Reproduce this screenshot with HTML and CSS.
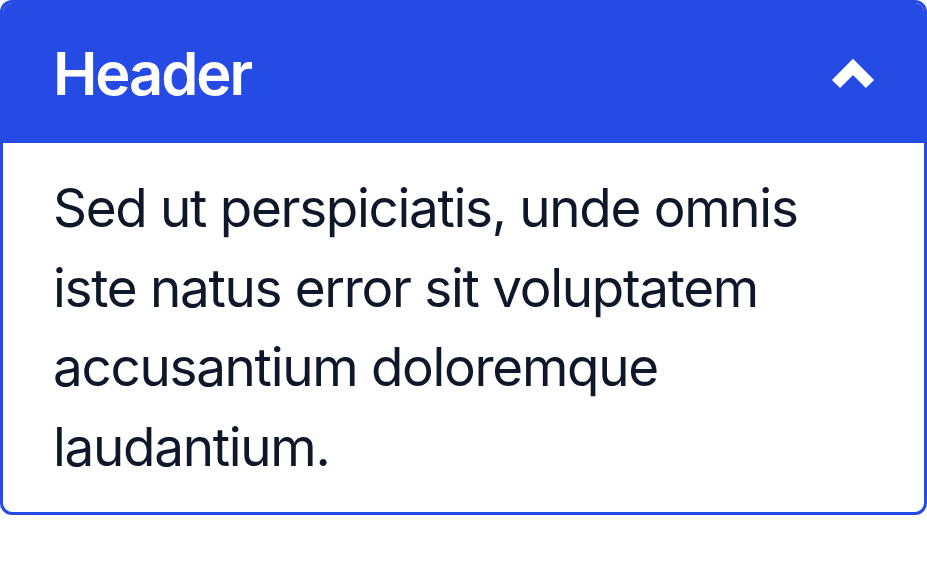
FILE: index.html
```html
<!DOCTYPE html>
<html lang="en">
<head>
<meta charset="utf-8">
<title>Accordion</title>
<link rel="stylesheet" href="styles.css">
</head>
<body>
  <div class="card">
    <div class="card-header">
      <span class="card-title">Header</span>
      <svg class="chevron" width="48" height="34" viewBox="0 0 48 34" aria-hidden="true">
        <polyline points="5,27 22,10 39,27" fill="none" stroke="#ffffff" stroke-width="11.5" stroke-linecap="butt" stroke-linejoin="miter"/>
      </svg>
    </div>
    <div class="card-body">
      Sed ut perspiciatis, unde omnis iste natus error sit voluptatem accusantium doloremque laudantium.
    </div>
  </div>
</body>
</html>
```

FILE: styles.css
```css
html, body {
  margin: 0;
  padding: 0;
  background: #ffffff;
}

body {
  font-family: Inter, "Noto Sans", "Liberation Sans", sans-serif;
}

.card {
  width: 927px;
  box-sizing: border-box;
  border: 3px solid #264be4;
  border-radius: 12px;
  overflow: hidden;
}

.card-header {
  background: #264be4;
  color: #ffffff;
  display: flex;
  align-items: center;
  justify-content: space-between;
  margin: -3px -3px 0 -3px;
  padding: 29px 48px 25px 53px;
}

.card-title {
  font-size: 59.6px;
  line-height: 1.5;
  font-weight: 600;
  letter-spacing: -2.1px;
}

.chevron {
  display: block;
}

.card-body {
  color: #0f172a;
  font-size: 53px;
  line-height: 1.5;
  font-weight: 400;
  letter-spacing: -1.3px;
  padding: 26px 50px 25px 50px;
}
```
